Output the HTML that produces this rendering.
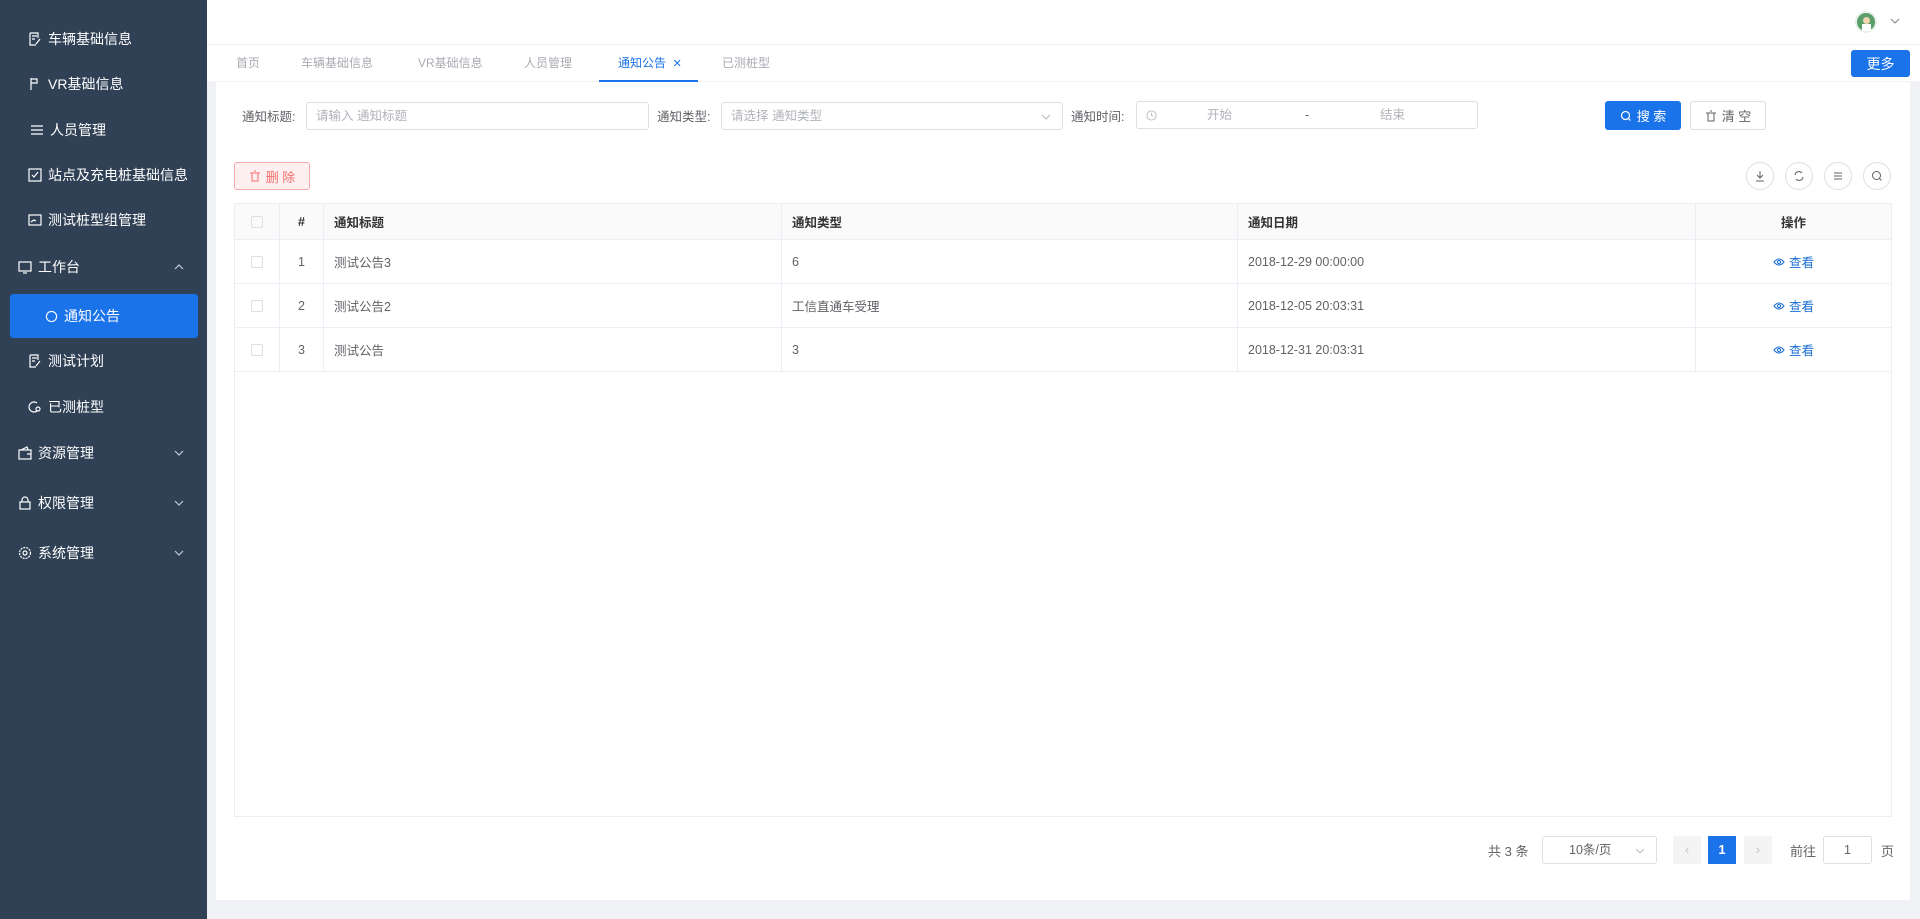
<!DOCTYPE html>
<html><head><meta charset="utf-8"><style>
*{box-sizing:border-box;margin:0;padding:0}
body{width:1920px;height:919px;overflow:hidden;background:#f0f2f5;font-family:"Liberation Sans","Noto Sans CJK SC",sans-serif;font-size:13px;color:#606266;position:relative}
.a{position:absolute}
#side{left:0;top:0;width:207px;height:919px;background:#304156}
.mi{position:absolute;color:#fff;font-size:14px;display:flex;align-items:center;height:20px}
.mi svg{margin-right:6px}
.chev{position:absolute;left:172px;width:14px;height:14px}
#hdr{left:207px;top:0;width:1713px;height:45px;background:#fff;border-bottom:1px solid #f0f0f0}
#tabs{left:207px;top:45px;width:1713px;height:37px;background:#fff;border-bottom:1px solid #f3f3f3}
.tab{position:absolute;top:9px;color:#a8abb2;font-size:12px}
#card{left:216px;top:82px;width:1694px;height:818px;background:#fff}
.inp{position:absolute;height:28px;border:1px solid #dcdfe6;border-radius:3px;background:#fff;color:#b0b3b9;font-size:12.5px;line-height:26px;padding-left:9px}
.lbl{position:absolute;font-size:12.5px;color:#606266;top:106px}
.btn{position:absolute;height:29px;border-radius:3px;font-size:13px;display:flex;align-items:center;justify-content:center}
.circ{position:absolute;top:162px;width:28px;height:28px;border:1px solid #dcdfe6;border-radius:50%;display:flex;align-items:center;justify-content:center}
#tbl{left:234px;top:203px;width:1658px;height:614px;border:1px solid #ebeef5}
.row{position:absolute;left:0;width:1656px;border-bottom:1px solid #ebeef5}
.c{position:absolute;top:0;height:100%;display:flex;align-items:center;border-right:1px solid #ebeef5;font-size:12.5px;color:#606266}
.cb{width:12px;height:12px;border:1px solid #dcdfe6;border-radius:2px}
.op{color:#1a6fd1;justify-content:center}
</style></head><body>
<div id="side" class="a">
 <div class="mi" style="left:28px;top:29px"><svg width="14" height="14" viewBox="0 0 14 14" fill="none" stroke="#fff" stroke-width="1.2"><path d="M2 1h8v5M2 1v12h6M4 4h5M4 7h3M8 12l4-5"/></svg>车辆基础信息</div>
 <div class="mi" style="left:28px;top:74px"><svg width="14" height="14" viewBox="0 0 14 14" fill="none" stroke="#fff" stroke-width="1.2"><path d="M3 1v12M3 2h6v4H3"/></svg>VR基础信息</div>
 <div class="mi" style="left:30px;top:120px"><svg width="14" height="14" viewBox="0 0 14 14" fill="none" stroke="#fff" stroke-width="1.2"><path d="M1 3h12M1 7h12M1 11h12"/></svg>人员管理</div>
 <div class="mi" style="left:28px;top:165px"><svg width="14" height="14" viewBox="0 0 14 14" fill="none" stroke="#fff" stroke-width="1.2"><rect x="1" y="1" width="12" height="12"/><path d="M4 7l2 2 4-5"/></svg>站点及充电桩基础信息</div>
 <div class="mi" style="left:28px;top:210px"><svg width="14" height="14" viewBox="0 0 14 14" fill="none" stroke="#fff" stroke-width="1.2"><rect x="1" y="2" width="12" height="10"/><path d="M3 9l3-2 2 1"/></svg>测试桩型组管理</div>
 <div class="mi" style="left:18px;top:257px"><svg width="14" height="14" viewBox="0 0 14 14" fill="none" stroke="#fff" stroke-width="1.2"><rect x="1" y="2" width="12" height="9"/><path d="M5 13h4"/></svg>工作台</div>
 <svg class="chev" style="top:260px" viewBox="0 0 14 14" fill="none" stroke="#bfcbd9" stroke-width="1.2"><path d="M3 9l4-4 4 4"/></svg>
 <div class="a" style="left:10px;top:294px;width:188px;height:44px;background:#1a73e8;border-radius:3px"></div>
 <div class="mi" style="left:45px;top:306px"><svg width="13" height="13" viewBox="0 0 14 14" fill="none" stroke="#fff" stroke-width="1.2"><circle cx="7" cy="7" r="5.5"/></svg>通知公告</div>
 <div class="mi" style="left:28px;top:351px"><svg width="14" height="14" viewBox="0 0 14 14" fill="none" stroke="#fff" stroke-width="1.2"><path d="M2 1h8v5M2 1v12h6M4 4h5M4 7h3M8 12l4-5"/></svg>测试计划</div>
 <div class="mi" style="left:28px;top:397px"><svg width="14" height="14" viewBox="0 0 14 14" fill="none" stroke="#fff" stroke-width="1.2"><path d="M9 3a5 5 0 1 0 0 8"/><circle cx="10" cy="9" r="2"/></svg>已测桩型</div>
 <div class="mi" style="left:18px;top:443px"><svg width="14" height="14" viewBox="0 0 14 14" fill="none" stroke="#fff" stroke-width="1.2"><rect x="1" y="4" width="12" height="9"/><path d="M3 4l6-3 1 3M9 8h4"/></svg>资源管理</div>
 <svg class="chev" style="top:446px" viewBox="0 0 14 14" fill="none" stroke="#bfcbd9" stroke-width="1.2"><path d="M3 5l4 4 4-4"/></svg>
 <div class="mi" style="left:18px;top:493px"><svg width="14" height="14" viewBox="0 0 14 14" fill="none" stroke="#fff" stroke-width="1.2"><rect x="2" y="6" width="10" height="7"/><path d="M4 6V4a3 3 0 0 1 6 0v2"/></svg>权限管理</div>
 <svg class="chev" style="top:496px" viewBox="0 0 14 14" fill="none" stroke="#bfcbd9" stroke-width="1.2"><path d="M3 5l4 4 4-4"/></svg>
 <div class="mi" style="left:18px;top:543px"><svg width="14" height="14" viewBox="0 0 14 14" fill="none" stroke="#fff" stroke-width="1.2"><circle cx="7" cy="7" r="2"/><circle cx="7" cy="7" r="5.5" stroke-dasharray="2 1"/></svg>系统管理</div>
 <svg class="chev" style="top:546px" viewBox="0 0 14 14" fill="none" stroke="#bfcbd9" stroke-width="1.2"><path d="M3 5l4 4 4-4"/></svg>
</div>
<div id="hdr" class="a">
 <div class="a" style="left:1648px;top:11px;width:22px;height:22px;border-radius:50%;background:#5a9e6a;border:2px solid #e8f0e8"><div class="a" style="left:6px;top:4px;width:7px;height:7px;border-radius:50%;background:#f3d3b0"></div><div class="a" style="left:5px;top:11px;width:9px;height:7px;background:#fff"></div></div>
 <svg class="a" style="left:1682px;top:15px" width="12" height="12" viewBox="0 0 12 12" fill="none" stroke="#888" stroke-width="1.1"><path d="M2 4l4 4 4-4"/></svg>
</div>
<div id="tabs" class="a">
 <div class="tab" style="left:29px">首页</div>
 <div class="tab" style="left:94px">车辆基础信息</div>
 <div class="tab" style="left:211px">VR基础信息</div>
 <div class="tab" style="left:317px">人员管理</div>
 <div class="tab" style="left:411px;color:#1a73e8">通知公告 &nbsp;<span style="font-size:11px">✕</span></div>
 <div class="a" style="left:392px;top:35px;width:99px;height:2px;background:#1a73e8"></div>
 <div class="tab" style="left:515px">已测桩型</div>
 <div class="a" style="left:1644px;top:5px;width:59px;height:27px;background:#1a73e8;border-radius:3px;color:#fff;font-size:14px;display:flex;align-items:center;justify-content:center">更多</div>
</div>
<div id="card" class="a"></div>
<div class="lbl" style="left:242px">通知标题:</div>
<div class="inp" style="left:306px;top:102px;width:343px">请输入 通知标题</div>
<div class="lbl" style="left:657px">通知类型:</div>
<div class="inp" style="left:721px;top:102px;width:342px">请选择 通知类型<svg class="a" style="right:10px;top:8px" width="12" height="12" viewBox="0 0 12 12" fill="none" stroke="#bbb"><path d="M2 4l4 4 4-4"/></svg></div>
<div class="lbl" style="left:1071px">通知时间:</div>
<div class="inp" style="left:1136px;top:101px;width:342px"><svg class="a" style="left:9px;top:8px" width="11" height="11" viewBox="0 0 12 12" fill="none" stroke="#bbb"><circle cx="6" cy="6" r="5"/><path d="M6 3v3l2 1"/></svg><span class="a" style="left:70px">开始</span><span class="a" style="left:168px;color:#606266">-</span><span class="a" style="left:243px">结束</span></div>
<div class="btn" style="left:1605px;top:101px;width:76px;background:#1a73e8;color:#fff"><svg width="12" height="12" viewBox="0 0 12 12" fill="none" stroke="#fff" stroke-width="1.2" style="margin-right:5px"><circle cx="5.5" cy="5.5" r="4"/><path d="M8.5 8.5l2 2"/></svg>搜 索</div>
<div class="btn" style="left:1690px;top:101px;width:76px;border:1px solid #dcdfe6;color:#606266"><svg width="12" height="12" viewBox="0 0 12 12" fill="none" stroke="#606266" style="margin-right:5px"><path d="M1 3h10M3 3v8h6V3M5 1h2"/></svg>清 空</div>
<div class="btn" style="left:234px;top:162px;width:76px;height:28px;border:1px solid #f5a9a9;background:#fef0f0;color:#f56c6c"><svg width="12" height="12" viewBox="0 0 12 12" fill="none" stroke="#f56c6c" style="margin-right:5px"><path d="M1 3h10M3 3v8h6V3M5 1h2"/></svg>删 除</div>
<div class="circ" style="left:1746px"><svg width="12" height="12" viewBox="0 0 12 12" fill="none" stroke="#606266"><path d="M6 1v7M3 5l3 3 3-3M2 11h8"/></svg></div>
<div class="circ" style="left:1785px"><svg width="12" height="12" viewBox="0 0 12 12" fill="none" stroke="#606266"><path d="M2 5a4 4 0 0 1 7-2M10 7a4 4 0 0 1-7 2"/></svg></div>
<div class="circ" style="left:1824px"><svg width="12" height="12" viewBox="0 0 12 12" fill="none" stroke="#606266"><path d="M2 3h8M2 6h8M2 9h8"/></svg></div>
<div class="circ" style="left:1863px"><svg width="12" height="12" viewBox="0 0 12 12" fill="none" stroke="#606266"><circle cx="5.5" cy="5.5" r="4"/><path d="M8.5 8.5l2 2"/></svg></div>
<div id="tbl" class="a">
 <div class="row" style="top:0;height:36px;background:#fafafa">
  <div class="c" style="left:0;width:45px;justify-content:center"><div class="cb"></div></div>
  <div class="c" style="left:45px;width:44px;justify-content:center;font-weight:bold;color:#333">#</div>
  <div class="c" style="left:89px;width:458px;padding-left:10px;font-weight:bold;color:#333">通知标题</div>
  <div class="c" style="left:547px;width:456px;padding-left:10px;font-weight:bold;color:#333">通知类型</div>
  <div class="c" style="left:1003px;width:458px;padding-left:10px;font-weight:bold;color:#333">通知日期</div>
  <div class="c" style="left:1461px;width:195px;justify-content:center;font-weight:bold;color:#333;border:0">操作</div>
 </div>
 <div class="row" style="top:36px;height:44px">
  <div class="c" style="left:0;width:45px;justify-content:center"><div class="cb"></div></div>
  <div class="c" style="left:45px;width:44px;justify-content:center">1</div>
  <div class="c" style="left:89px;width:458px;padding-left:10px">测试公告3</div>
  <div class="c" style="left:547px;width:456px;padding-left:10px">6</div>
  <div class="c" style="left:1003px;width:458px;padding-left:10px">2018-12-29 00:00:00</div>
  <div class="c op" style="left:1461px;width:195px;border:0"><svg width="12" height="12" viewBox="0 0 12 12" fill="none" stroke="#1a6fd1" style="margin-right:4px"><path d="M1 6q5-6 10 0q-5 6-10 0z"/><circle cx="6" cy="6" r="1.5"/></svg>查看</div>
 </div>
 <div class="row" style="top:80px;height:44px">
  <div class="c" style="left:0;width:45px;justify-content:center"><div class="cb"></div></div>
  <div class="c" style="left:45px;width:44px;justify-content:center">2</div>
  <div class="c" style="left:89px;width:458px;padding-left:10px">测试公告2</div>
  <div class="c" style="left:547px;width:456px;padding-left:10px">工信直通车受理</div>
  <div class="c" style="left:1003px;width:458px;padding-left:10px">2018-12-05 20:03:31</div>
  <div class="c op" style="left:1461px;width:195px;border:0"><svg width="12" height="12" viewBox="0 0 12 12" fill="none" stroke="#1a6fd1" style="margin-right:4px"><path d="M1 6q5-6 10 0q-5 6-10 0z"/><circle cx="6" cy="6" r="1.5"/></svg>查看</div>
 </div>
 <div class="row" style="top:124px;height:44px">
  <div class="c" style="left:0;width:45px;justify-content:center"><div class="cb"></div></div>
  <div class="c" style="left:45px;width:44px;justify-content:center">3</div>
  <div class="c" style="left:89px;width:458px;padding-left:10px">测试公告</div>
  <div class="c" style="left:547px;width:456px;padding-left:10px">3</div>
  <div class="c" style="left:1003px;width:458px;padding-left:10px">2018-12-31 20:03:31</div>
  <div class="c op" style="left:1461px;width:195px;border:0"><svg width="12" height="12" viewBox="0 0 12 12" fill="none" stroke="#1a6fd1" style="margin-right:4px"><path d="M1 6q5-6 10 0q-5 6-10 0z"/><circle cx="6" cy="6" r="1.5"/></svg>查看</div>
 </div>
</div>
<div class="a" style="left:1488px;top:841px;font-size:13px">共 3 条</div>
<div class="inp" style="left:1542px;top:836px;width:115px;color:#606266;padding-left:26px">10条/页<svg class="a" style="right:10px;top:8px" width="12" height="12" viewBox="0 0 12 12" fill="none" stroke="#bbb"><path d="M2 4l4 4 4-4"/></svg></div>
<div class="a" style="left:1673px;top:836px;width:28px;height:28px;background:#f4f4f5;color:#c0c4cc;text-align:center;line-height:28px">‹</div>
<div class="a" style="left:1708px;top:836px;width:28px;height:28px;background:#1a73e8;color:#fff;text-align:center;line-height:28px;font-weight:bold">1</div>
<div class="a" style="left:1744px;top:836px;width:28px;height:28px;background:#f4f4f5;color:#c0c4cc;text-align:center;line-height:28px">›</div>
<div class="a" style="left:1790px;top:841px">前往</div>
<div class="inp" style="left:1823px;top:836px;width:49px;text-align:center;padding:0;color:#606266">1</div>
<div class="a" style="left:1881px;top:841px">页</div>
</body></html>
